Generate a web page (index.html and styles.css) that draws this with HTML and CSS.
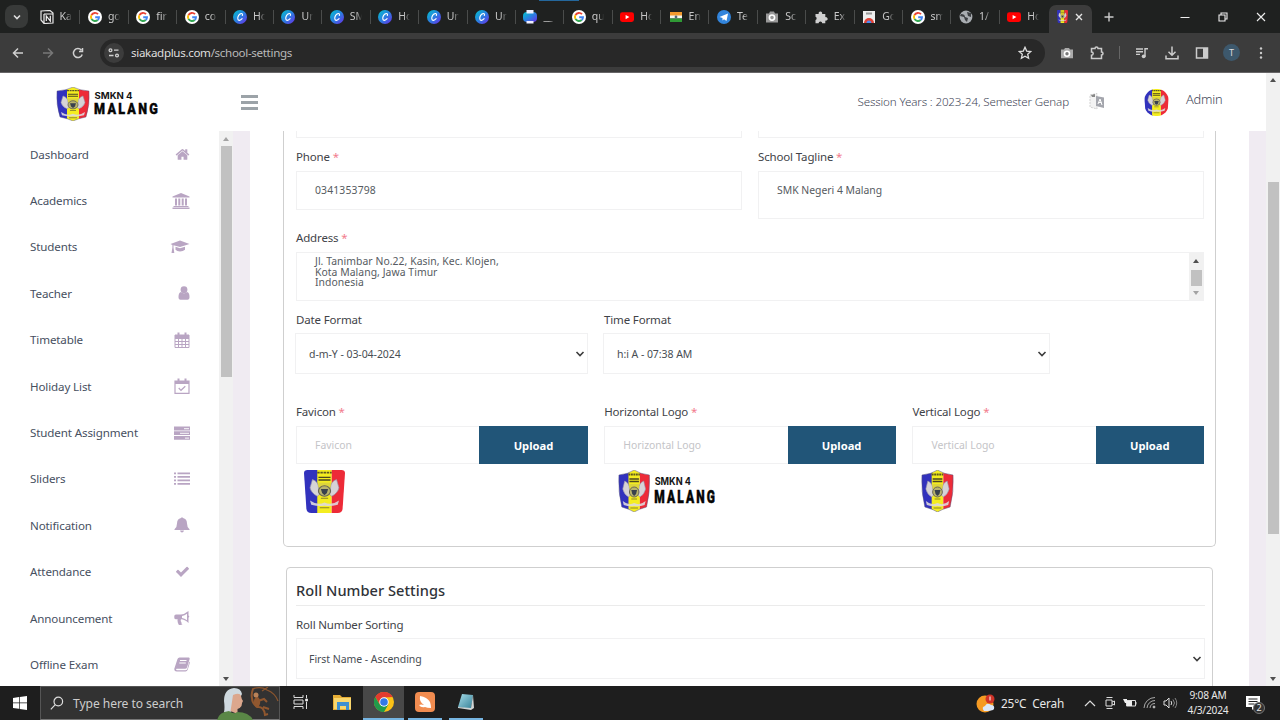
FILE: index.html
```html
<!DOCTYPE html>
<html lang="en">
<head>
<meta charset="utf-8">
<title>School Settings</title>
<link rel="stylesheet" href="styles.css">
</head>
<body>
<svg class="defs" aria-hidden="true">
  <defs>
    <linearGradient id="canvaFill" x1="0" y1="0" x2="1" y2="1"><stop offset="0" stop-color="#00c4cc"/><stop offset=".5" stop-color="#2a7fe0"/><stop offset="1" stop-color="#6b2be8"/></linearGradient>
    <linearGradient id="padFill" x1="0" y1="0" x2="1" y2="1"><stop offset="0" stop-color="#a6dce8"/><stop offset="1" stop-color="#337f96"/></linearGradient>
    <clipPath id="shield"><path d="M1 5Q11 4 17 0Q23 4 33 5Q34 22 30 37Q22 39 17 42Q12 39 4 37Q0 22 1 5Z"/></clipPath>
    <clipPath id="badge"><path d="M3 0H31Q34 0 34 3L32 38Q31.500 42 28 42H6Q2.500 42 2 38L0 3Q0 0 3 0Z"/></clipPath>
  </defs>
  <symbol id="google" viewBox="0 0 14 14"><circle cx="7" cy="7" r="7" fill="#fff"/><g fill="none" stroke-width="1.9"><path d="M10 4.2A4.1 4.1 0 0 0 3.5 4.9" stroke="#ea4335"/><path d="M3.5 4.9a4.1 4.1 0 0 0 0 4.2" stroke="#fbbc05"/><path d="M3.5 9.1A4.1 4.1 0 0 0 9.7 10" stroke="#34a853"/><path d="M9.7 10A4 4 0 0 0 11 7.2H7.2" stroke="#4285f4"/></g></symbol>
  <symbol id="canva" viewBox="0 0 14 14"><circle cx="7" cy="7" r="7" fill="url(#canvaFill)"/><path d="M9.3 5.5c.7-1.4-.3-2.2-1.3-1.9C5.900 4.100 4.500 6.800 4.800 8.800c.3 2.200 2.700 2 4.300-.1" fill="none" stroke="#fff" stroke-width="1.100" stroke-linecap="round"/></symbol>
  <symbol id="youtube" viewBox="0 0 14 14"><rect y="2.300" width="14" height="9.600" rx="2.300" fill="#f00"/><path d="M5.600 4.900v4.400L9.400 7.100z" fill="#fff"/></symbol>
  <symbol id="emblem" viewBox="0 0 34 42" preserveAspectRatio="none">
    <path d="M11 4.500h12" stroke="#5c5720" stroke-width="1.800" stroke-dasharray="2 .6"/><path d="M12 9h10M12 11.500h10" stroke="#4a4520" stroke-width="1.300"/>
    <path d="M7 11q5 2 5 8l3 4-4 4q-5-3-6-8 1-4 2-8zM27 11q-5 2-5 8l-3 4 4 4q5-3 6-8-1-4-2-8z" fill="#d6d3d6" stroke="#9793a8" stroke-width=".6"/>
    <path d="M5 31q6 5 12 2q6 3 12-2l-1 4q-6 2-11 1q-5 1-11-1z" fill="#ddd8dc" opacity=".9"/>
    <path d="M12 14h10v4H12z" fill="#ddd53c"/>
    <circle cx="17" cy="22" r="5" fill="#b9b46c" stroke="#686556"/><path d="M14 20h6l-1 4-2 2-2-2z" fill="#39414d"/><path d="M14 29h6M13 38h8" stroke="#8b842a"/>
  </symbol>
  <symbol id="crest" viewBox="0 0 34 42" preserveAspectRatio="none">
    <g clip-path="url(#shield)"><path d="M0 0h12v42H0z" fill="#3232bd"/><path d="M11 0h12v42H11z" fill="#f4ed20"/><path d="M23 0h11v42H23z" fill="#ed2b38"/></g>
    <use href="#emblem" width="34" height="42"/>
    <path d="M1 5Q11 4 17 0Q23 4 33 5Q34 22 30 37Q22 39 17 42Q12 39 4 37Q0 22 1 5Z" fill="none" stroke="#55517a" stroke-width=".5"/>
  </symbol>
  <symbol id="crestBadge" viewBox="0 0 34 42" preserveAspectRatio="none">
    <g clip-path="url(#badge)"><path d="M0 0h12v42H0z" fill="#3232bd"/><path d="M11 0h12v42H11z" fill="#f4ed20"/><path d="M23 0h11v42H23z" fill="#ed2b38"/></g>
    <use href="#emblem" y="-2" width="34" height="43"/>
  </symbol>
  <symbol id="brand" viewBox="0 0 103 42"><use href="#crest" width="34" height="42"/><text class="brand-top" transform="translate(38.500 14.500) scale(.93 1)">SMKN 4</text><text class="brand-main" transform="translate(38 33) scale(.68 1)">MALANG</text></symbol>
  <symbol id="caret" viewBox="0 0 10 8"><path d="M1.500 2l3.500 3.500L8.500 2" fill="none" stroke="#3d3d3d" stroke-width="1.600"/></symbol>
</svg>

<header class="tabs">
  <span class="drag-mark"></span>
  <button class="tab-search"><svg viewBox="0 0 10 10" width="10" height="10"><path d="M2 3.500l3 3 3-3" fill="none" stroke="#ddd" stroke-width="1.600"/></svg></button>
  <div class="tab"><svg viewBox="0 0 14 14"><path d="M1 1l9-.5L13 3v10l-9 .5L1 10z" fill="#222" stroke="#e8e8e8" stroke-width="1.200"/><path d="M4 4h9M4 4v9M6.300 11V6l4 5V5.800" fill="none" stroke="#f2f2f2" stroke-width="1.200"/></svg><span>Ka</span></div>
  <div class="tab"><svg><use href="#google"/></svg><span>go</span></div>
  <div class="tab"><svg><use href="#google"/></svg><span>fir</span></div>
  <div class="tab"><svg><use href="#google"/></svg><span>co</span></div>
  <div class="tab"><svg><use href="#canva"/></svg><span>Ho</span></div>
  <div class="tab"><svg><use href="#canva"/></svg><span>Un</span></div>
  <div class="tab"><svg><use href="#canva"/></svg><span>SM</span></div>
  <div class="tab"><svg><use href="#canva"/></svg><span>Ho</span></div>
  <div class="tab"><svg><use href="#canva"/></svg><span>Un</span></div>
  <div class="tab"><svg><use href="#canva"/></svg><span>Un</span></div>
  <div class="tab"><svg viewBox="0 0 14 14"><rect y="2" width="14" height="10" rx="4" fill="url(#canvaFill)"/><path d="M3.500 0h7v3.500h-7zM3.500 11h7v2.500h-7z" fill="#eef"/></svg><span>__</span></div>
  <div class="tab"><svg><use href="#google"/></svg><span>qu</span></div>
  <div class="tab"><svg><use href="#youtube"/></svg><span>Ho</span></div>
  <div class="tab"><svg viewBox="0 0 14 14"><path d="M1 2h12v4H1z" fill="#f29a2e"/><path d="M1 5.500h12v3H1z" fill="#f5f5ee"/><path d="M1 8.500h12V12H1z" fill="#2f9a35"/><circle cx="7" cy="7" r="1.400" fill="#567"/></svg><span>En</span></div>
  <div class="tab"><svg viewBox="0 0 14 14"><circle cx="7" cy="7" r="7" fill="#3285dc"/><path d="M2.500 7L11 3.500 9.500 11 7 9.200 5.500 10.500V8z" fill="#fff"/></svg><span>Te</span></div>
  <div class="tab"><svg viewBox="0 0 14 14"><path d="M1 3.500h3L5 1.500h4l1 2h3v9H1z" fill="#999"/><circle cx="7" cy="7.600" r="2.600" fill="#999" stroke="#fff" stroke-width="1.600"/></svg><span>Sc</span></div>
  <div class="tab"><svg viewBox="0 0 14 14"><path d="M1.500 4h3.200a1.800 1.800 0 1 1 3.400 0h3.200v3.200a1.800 1.800 0 1 1 0 3.400v2.600H8.200a1.800 1.800 0 0 0-3.600 0H1.500V10a1.700 1.700 0 0 0 0-3.200z" fill="#cfcfcf"/></svg><span>Ex</span></div>
  <div class="tab"><svg viewBox="0 0 14 14"><path d="M1 1h12v12H1z" fill="#eee"/><path d="M2 13a5 5 0 0 1 10 0z" fill="#e04437"/><path d="M4.500 13a2.500 2.500 0 0 1 5 0z" fill="#4c8bf5"/><path d="M4 2.500h6v2H4z" fill="#999"/></svg><span>Go</span></div>
  <div class="tab"><svg><use href="#google"/></svg><span>sm</span></div>
  <div class="tab"><svg viewBox="0 0 14 14"><circle cx="7" cy="7" r="6.400" fill="#a9adb1"/><path d="M2 4q4 0 4 3l3 1-1 4-2-2-1-3-4-1zM8 2l4 1v4l-3-1z" fill="#3c3f42"/></svg><span>1/</span></div>
  <div class="tab last"><svg><use href="#youtube"/></svg><span>Ho</span></div>
  <div class="tab-active"><svg width="11" height="13"><use href="#crestBadge"/></svg><svg width="8" height="8" viewBox="0 0 8 8"><path d="M1 1l6 6M7 1L1 7" stroke="#e4e4e4" stroke-width="1.400"/></svg></div>
  <svg class="new-tab" width="10" height="10" viewBox="0 0 10 10"><path d="M5 .5v9M.5 5h9" stroke="#ccc" stroke-width="1.400"/></svg>
  <div class="window-controls">
    <svg width="10" height="10" viewBox="0 0 10 10"><path d="M.5 5.500h9" stroke="#eee"/></svg>
    <svg width="10" height="10" viewBox="0 0 10 10"><path d="M1 3h6v6H1zM3 3V1h6v6H7" fill="none" stroke="#eee" stroke-width="1.100"/></svg>
    <svg width="10" height="10" viewBox="0 0 10 10"><path d="M1 1l8 8M9 1L1 9" stroke="#eee" stroke-width="1.100"/></svg>
  </div>
</header>

<nav class="toolbar">
  <div class="nav-buttons">
    <svg width="12" height="12" viewBox="0 0 12 12"><path d="M11 6H1.500M6 1.500L1.500 6 6 10.500" stroke="#d0d0d0"/></svg>
    <svg width="12" height="12" viewBox="0 0 12 12"><path d="M1 6h9.500M6 1.500L10.500 6 6 10.500" stroke="#787878"/></svg>
    <svg width="12" height="12" viewBox="0 0 12 12"><path d="M10.200 7.500a4.500 4.500 0 1 1-.8-4.300M10.500 1v3.500H7" stroke="#d0d0d0"/></svg>
  </div>
  <div class="omnibox">
    <span class="site-info"><svg width="12" height="10" viewBox="0 0 12 10" fill="none" stroke="#d0d0d0" stroke-width="1.300"><circle cx="2.500" cy="2.200" r="1.400"/><path d="M6 2.200h4.500M1 7.500h4.500"/><circle cx="9" cy="7.500" r="1.400"/></svg></span>
    <span class="url">siakadplus.com<em>/school-settings</em></span>
    <svg class="star" width="14" height="14" viewBox="0 0 14 14"><path d="M7 1.300l1.700 3.800 4.100.4-3.100 2.700.9 4.100L7 10.200l-3.600 2.100.9-4.100-3.100-2.700 4.100-.4z" fill="none" stroke="#dedede" stroke-width="1.300"/></svg>
  </div>
  <div class="extensions">
    <svg width="14" height="14" viewBox="0 0 14 14"><path d="M1 3.500h3l1-1.500h4l1 1.500h3v8.800H1z" fill="#aaa"/><circle cx="7" cy="7.800" r="2.500" fill="#777" stroke="#fff" stroke-width="1.600"/></svg>
    <svg width="14" height="14" viewBox="0 0 14 14"><path d="M1.500 2.500H5a1.500 1.500 0 0 1 3 0h3.500V6a1.500 1.500 0 0 1 0 3v3.500h-10V9.300a1.700 1.700 0 0 0 0-3.400z" fill="none" stroke="#ccc" stroke-width="1.500"/></svg>
    <i></i>
    <svg width="14" height="14" viewBox="0 0 14 14"><path d="M1 3h7M1 5.700h7M1 8.400h4M10 10.500V2.800h3" fill="none" stroke="#ccc" stroke-width="1.400"/><circle cx="8.700" cy="10.300" r="1.900" fill="#ccc"/></svg>
    <svg width="14" height="14" viewBox="0 0 14 14"><path d="M7 .5V9M3.500 5.700L7 9.200l3.500-3.500M1 9.500v3.300h12V9.500" fill="none" stroke="#ccc" stroke-width="1.500"/></svg>
    <svg width="14" height="14" viewBox="0 0 14 14"><path d="M1.500 2h11v10h-11z" fill="none" stroke="#ccc" stroke-width="1.500"/><path d="M8 2h5v10H8z" fill="#ccc"/></svg>
    <b>T</b>
    <svg class="kebab" width="14" height="14" viewBox="0 0 14 14" fill="#ccc"><circle cx="7" cy="2.500" r="1.200"/><circle cx="7" cy="7" r="1.200"/><circle cx="7" cy="11.500" r="1.200"/></svg>
  </div>
</nav>

<main class="viewport">
  <div class="app">
    <header class="app-header">
      <svg class="app-logo" viewBox="0 0 103 42" preserveAspectRatio="none"><use href="#brand" width="103" height="42"/></svg>
      <div class="burger"><i></i><i></i><i></i></div>
      <span class="session">Session Years : 2023-24, Semester Genap</span>
      <svg class="translate" width="16" height="18" viewBox="0 0 16 18"><path d="M1 2l7-1.500V16l-7-2z" fill="#f3f3f3" stroke="#c5c5c5" stroke-width=".8" stroke-dasharray="2 1"/><path d="M2 2l4-1v3H3z" fill="#888"/><path d="M7 3l8 1.500V15l-8-2z" fill="#a4a6ad"/><path d="M9 11l2-5 2 6M9.500 9.500h3" fill="none" stroke="#fff"/></svg>
      <svg class="avatar" viewBox="0 0 34 42" preserveAspectRatio="none"><use href="#crestBadge" width="34" height="42"/></svg>
      <span class="user">Admin</span>
    </header>
    <div class="app-body">
      <aside class="sidebar">
        <ul class="menu">
          <li><span>Dashboard</span><svg viewBox="0 0 1792 1792" width="15" height="15"><path d="M1472 992v480q0 26-19 45t-45 19h-384v-384h-256v384h-384q-26 0-45-19t-19-45v-480q0-1 .5-3t.5-3l575-474 575 474q1 2 1 6zm223-69l-62 74q-8 9-21 11h-3q-13 0-21-7l-692-577-692 577q-12 8-24 7-13-2-21-11l-62-74q-8-10-7-23.500t11-21.500l719-599q32-26 76-26t76 26l244 204v-195q0-14 9-23t23-9h192q14 0 23 9t9 23v408l219 182q10 8 11 21.500t-7 23.500z"/></svg></li>
          <li><span>Academics</span><svg viewBox="0 0 18 16" width="18" height="16"><path d="M9 0l8.500 3.500v1H.5v-1zM3 5.500h2v7H3zM6.300 5.500h2v7h-2zM9.700 5.500h2v7h-2zM13 5.500h2v7h-2zM1.500 13h15v1h-15zM.5 14.500h17V16H.5z"/></svg></li>
          <li><span>Students</span><svg viewBox="0 0 20 14" width="20" height="14"><path d="M10 .5L19.500 4 10 7 3.500 5.200v2.300l.8 5.500H1.500l.9-5.500V4.900L.5 4zM5.500 6.800L10 8.300l5-1.500v3q-2 1.800-5 1.800t-4.500-1.800z"/></svg></li>
          <li><span>Teacher</span><svg viewBox="0 0 12 14" width="12" height="14"><circle cx="6" cy="3.700" r="3.400"/><path d="M3 6q3 2.600 6 0 2.500.5 2.500 5 0 2.800-2 2.800h-7q-2 0-2-2.800Q.5 6.500 3 6z"/></svg></li>
          <li><span>Timetable</span><svg viewBox="0 0 16 16" width="16" height="16"><path d="M1 3h14v12.500H1zM1 6.500h14M4.500 6.500v9M8 6.500v9M11.500 6.500v9M1 9.500h14M1 12.500h14" fill="none" stroke="#b9a5c3"/><path d="M1 3h14v3H1zM3.500.5h2v4h-2zM10.500.5h2v4h-2z"/></svg></li>
          <li><span>Holiday List</span><svg viewBox="0 0 16 16" width="16" height="16"><path d="M1 3h14v12.300H1z" fill="none" stroke="#b9a5c3" stroke-width="1.200"/><path d="M1 3h14v3H1zM3.500.5h2v4h-2zM10.500.5h2v4h-2z"/><path d="M4.700 10l2.300 2.300 4.300-4" fill="none" stroke="#b9a5c3" stroke-width="1.200"/></svg></li>
          <li><span>Student Assignment</span><svg viewBox="0 0 16 14" width="16" height="14"><path d="M0 .5h16v4H0zM0 5.300h16v3.700H0zM0 10h16v3.700H0z"/><path d="M10 2h5v1.200h-5zM6 6.700h9v1.200H6zM11 11.500h4v1.200h-4z" fill="#fff" opacity=".75"/></svg></li>
          <li><span>Sliders</span><svg viewBox="0 0 16 13" width="16" height="13"><path d="M0 .5h2v1.800H0zM3.500.5H16v1.800H3.500zM0 4h2v1.800H0zM3.500 4H16v1.800H3.500zM0 7.500h2v1.800H0zM3.500 7.500H16v1.800H3.500zM0 11h2v1.800H0zM3.500 11H16v1.800H3.500z"/></svg></li>
          <li><span>Notification</span><svg viewBox="0 0 16 16" width="16" height="16"><path d="M7 1q1-1.500 2 0 4 .8 4 5.500 0 4 2.500 5.800v.7H.5v-.7Q3 10.500 3 6.500 3 1.800 7 1zM6 13.500h4q-.5 2-2 2t-2-2z"/></svg></li>
          <li><span>Attendance</span><svg viewBox="0 0 1792 1792" width="15" height="15"><path d="M1671 566q0 40-28 68l-724 724-136 136q-28 28-68 28t-68-28l-136-136-362-362q-28-28-28-68t28-68l136-136q28-28 68-28t68 28l294 295 656-657q28-28 68-28t68 28l136 136q28 28 28 68z"/></svg></li>
          <li><span>Announcement</span><svg viewBox="0 0 16 14" width="16" height="14"><path d="M14.500 0v4.500q1.500 1 0 2.300V12q-4-3.700-7.300-3.700-1.200 1 .3 3-.5 1.200 1 2-1.500 1-3.800.4-1.700-3.500-1-5.400H2Q.3 8.300.3 6.800V5Q.3 3.500 2 3.500h5Q10.500 3.300 14.500 0zM13 2.800Q10.500 4.600 8 5v2q2.500.5 5 2.200z" fill-rule="evenodd"/></svg></li>
          <li><span>Offline Exam</span><svg viewBox="0 0 16 15" width="16" height="15"><path d="M5.500.5H15q1 .5.500 2l-2.500 8q-.5 1.300-2 1.300H2.500q-1 1.200.5 1.400h8.500q1.300 0 1.800-1.200l2-7.500q.8.500.4 1.800l-2 6.500q-.6 1.700-2.200 1.700H2.700Q0 14.500.3 11.800L3.500 2Q4 .5 5.500.5z"/><path d="M6 3.500h6.500M5.300 6h6.500" stroke="#fff"/></svg></li>
        </ul>
        <div class="scroll side-scroll"><span class="up dim"></span><i></i><span class="down"></span></div>
      </aside>
      <section class="content">
        <div class="card school">
          <div class="row halves stub"><div class="box"></div><div class="box"></div></div>
          <div class="row halves contact">
            <div class="field"><label>Phone <em>*</em></label><div class="box input phone">0341353798</div></div>
            <div class="field"><label>School Tagline <em>*</em></label><div class="box input tall"><span>SMK Negeri 4 Malang</span></div></div>
          </div>
          <div class="field address">
            <label>Address <em>*</em></label>
            <div class="box area"><p>Jl. Tanimbar No.22, Kasin, Kec. Klojen,<br>Kota Malang, Jawa Timur<br>Indonesia</p><div class="scroll area-scroll"><span class="up"></span><i></i><span class="down dim"></span></div></div>
          </div>
          <div class="row formats">
            <div class="field"><label>Date Format</label><div class="box select"><span>d-m-Y - 03-04-2024</span><svg><use href="#caret"/></svg></div></div>
            <div class="field"><label>Time Format</label><div class="box select"><span>h:i A - 07:38 AM</span><svg><use href="#caret"/></svg></div></div>
          </div>
          <div class="row uploads">
            <div class="field"><label>Favicon <em>*</em></label><div class="upload"><div class="box input hint">Favicon</div><button>Upload</button></div><svg class="pic favicon" viewBox="0 0 34 42" preserveAspectRatio="none"><use href="#crestBadge" width="34" height="42"/></svg></div>
            <div class="field"><label>Horizontal Logo <em>*</em></label><div class="upload"><div class="box input hint">Horizontal Logo</div><button>Upload</button></div><svg class="pic horizontal" viewBox="0 0 103 42" preserveAspectRatio="none"><use href="#brand" width="103" height="42"/></svg></div>
            <div class="field"><label>Vertical Logo <em>*</em></label><div class="upload"><div class="box input hint">Vertical Logo</div><button>Upload</button></div><svg class="pic vertical" viewBox="0 0 34 42" preserveAspectRatio="none"><use href="#crest" width="34" height="42"/></svg></div>
          </div>
        </div>
        <div class="card roll">
          <h2>Roll Number Settings</h2>
          <div class="field"><label>Roll Number Sorting</label><div class="box select"><span>First Name - Ascending</span><svg><use href="#caret"/></svg></div></div>
        </div>
      </section>
    </div>
  </div>
  <div class="scroll page-scroll"><span class="up"></span><i></i><span class="down"></span></div>
</main>

<footer class="taskbar">
  <div class="start"><svg width="14" height="14" viewBox="0 0 14 14" fill="#fff"><path d="M0 2l6-.9v5.500H0zM6.700 1L14 0v6.600H6.700zM0 7.300h6v5.500L0 12zM6.700 7.300H14V14l-7.300-1z"/></svg></div>
  <div class="search">
    <svg width="14" height="14" viewBox="0 0 14 14"><circle cx="8.300" cy="5.500" r="4.300" fill="none" stroke="#ddd" stroke-width="1.200"/><path d="M5.300 8.700L.8 13.300" stroke="#ddd" stroke-width="1.200"/></svg>
    <span>Type here to search</span>
    <svg class="doodle" width="64" height="33" viewBox="0 0 64 33"><path d="M9 25q1-4 0-11Q9 2 19 1q7 0 8 6l-7 14q-5 6-11 4z" fill="#cfd9df"/><path d="M18 8q7-3 8 1 .5 3 2 5-1 1-1.500 5-2 3-4 3v5l-7-3 1-6z" fill="#dca78d"/><path d="M2 33q2-8 12-9 5 4 8 1 12 0 16 8z" fill="#5a8746"/><path d="M37 2q9-3 15 1 8 3 11 11M47 4l6-4" fill="none" stroke="#8b552e" stroke-width="1.300"/><path d="M38 2q-2 5-1 9 0 5 5 9 7-1 8 8l3-1M43 14l6-2 3 3M48 20l6 2" fill="none" stroke="#90572f" stroke-width="2"/><ellipse cx="42" cy="15" rx="3.200" ry="5" fill="#90572f"/><circle cx="41" cy="8" r="2.500" fill="#b98258"/></svg>
  </div>
  <div class="app-slot view"><svg width="16" height="14" viewBox="0 0 16 14" fill="none" stroke="#ddd"><path d="M1 0v2.500h9V0M1 14v-2.500h9V14M1 5h9v4H1zM13.500 0v3M13.500 7v7"/><path d="M12.700 4h1.800v2h-1.800z" fill="#fff"/></svg></div>
  <div class="app-slot"><svg width="19" height="16" viewBox="0 0 19 16"><path d="M0 1h7l2 2h9v13H0z" fill="#e6ad35"/><path d="M1 4h17v11H1z" fill="#f8d66d"/><path d="M4 8h12v8h-3v-4H7v4H4z" fill="#3d8fd1"/></svg></div>
  <div class="app-slot open current"><svg width="20" height="20" viewBox="0 0 20 20"><circle cx="10" cy="10" r="10" fill="#fbc116"/><path d="M1.300 5A10 10 0 0 1 18.700 5L10 5.500 5.700 12.500z" fill="#e33b2e"/><path d="M1.300 5A10 10 0 0 0 10 20l4.300-7.500H5.700z" fill="#219b4b"/><circle cx="10" cy="10" r="4.700" fill="#fff"/><circle cx="10" cy="10" r="3.800" fill="#3478e5"/></svg></div>
  <div class="app-slot open"><svg width="20" height="20" viewBox="0 0 20 20"><rect width="20" height="20" rx="4" fill="#f18c50"/><path d="M5 4q7 1 10 6 1 3 1 6-4 0-6-1-4 1-6-2 2-1 5 0Q4 10 5 4z" fill="#fff"/></svg></div>
  <div class="app-slot open"><svg width="20" height="18" viewBox="0 0 20 18"><path d="M6 1l11 1-2 14-13-2z" fill="url(#padFill)"/><path d="M17 2l1 13-3 2-13-2v-1l13 1z" fill="#d0d5d5"/></svg></div>
  <div class="tray">
    <svg width="20" height="19" viewBox="0 0 20 19"><circle cx="9" cy="10" r="8.500" fill="#f59a23"/><path d="M8 17q-3-4 1-5 2-4 6-1 4 0 3 4-1 2-10 2z" fill="#dbe8fb"/><circle cx="14" cy="5" r="4.500" fill="#cf3328"/><path d="M14 2.500v4" stroke="#fff"/></svg>
    <span class="weather">25°C&nbsp; Cerah</span>
    <svg class="chev" width="12" height="8" viewBox="0 0 12 8"><path d="M1 7l5-5 5 5" fill="none" stroke="#ddd" stroke-width="1.200"/></svg>
    <svg class="ic" width="14" height="14" viewBox="0 0 14 14" fill="none" stroke="#ddd"><path d="M3 4h6v6H3zM9 6l2.500-1v4L9 8M3.500 1.500h6M3.500 12.500h6"/></svg>
    <svg class="ic" width="14" height="14" viewBox="0 0 14 14"><path d="M3.500 4.500h9v5.500h-9zM13 6v2.500" fill="none" stroke="#ddd"/><path d="M4 5h5v5H4zM0 3h4v4H2z" fill="#eee"/></svg>
    <svg class="ic" width="14" height="14" viewBox="0 0 14 14" fill="none" stroke="#aaa"><path d="M1 12A11 11 0 0 1 12 1.500M4 12a8 8 0 0 1 8-7.500M7 12a5 5 0 0 1 5-4.500"/><circle cx="11" cy="11" r="1" fill="#fff"/></svg>
    <svg class="vol" width="15" height="14" viewBox="0 0 15 14" fill="none" stroke="#ddd"><path d="M1 5h2l3-3v10L3 9H1zM8 5q1.500 2 0 4"/><path d="M10 3.500q3 3.500 0 7M12 2q3.500 5 0 10" stroke="#888"/></svg>
    <div class="clock"><span>9:08 AM</span><span>4/3/2024</span></div>
    <div class="notices"><svg width="15" height="15" viewBox="0 0 15 15"><path d="M0 0h14v11H9l-3 3v-3H0z" fill="#fff"/><path d="M2.500 3h9M2.500 5.500h9M2.500 8h6" stroke="#222"/></svg><b>2</b></div>
  </div>
</footer>
</body>
</html>
```
FILE: styles.css
```css
* { box-sizing: border-box; }
body { margin: 0; width: 1280px; height: 720px; overflow: hidden; display: flex; flex-direction: column; font-family: "Noto Sans", sans-serif; background: #fff; }
button { border: 0; padding: 0; font-family: inherit; }
em { font-style: normal; }
svg { display: block; flex: none; }
.defs { position: absolute; width: 0; height: 0; }
.brand-top { font: 700 10.3px Inter, sans-serif; fill: #151515; }
.brand-main { font: 900 18.5px Roboto, sans-serif; letter-spacing: 3.3px; fill: #050505; stroke: #050505; stroke-width: .5px; }

/* Browser tab strip */
.tabs { position: relative; height: 33px; flex: none; display: flex; align-items: center; background: #1f2120; color: #c8c8c8; }
.drag-mark { position: absolute; left: 539px; top: 0; width: 40px; height: 1px; background: #24679c; }
.tab-search { width: 23px; height: 23px; margin: 0 4px 0 5px; border-radius: 8px; background: #383a39; display: grid; place-items: center; }
.tab { width: 48.4px; height: 14px; flex: none; display: flex; align-items: center; padding-left: 7.5px; border-right: 1px solid #4a4c4b; }
.tab.last { border-color: transparent; }
.tab svg { width: 14px; height: 14px; }
.tab span { margin-left: 6px; width: 18px; white-space: nowrap; font-size: 10.5px; line-height: 15px; -webkit-mask-image: linear-gradient(90deg, #000 6px, transparent 12px); mask-image: linear-gradient(90deg, #000 6px, transparent 12px); }
.tab-active { align-self: flex-end; width: 43px; height: 28px; margin-left: 1px; border-radius: 7px 7px 0 0; background: #3c3c3c; display: flex; align-items: center; gap: 7px; padding: 0 0 5px 8px; }
.new-tab { margin-left: 12px; }
.window-controls { margin: 0 14px 0 auto; display: flex; gap: 28px; }

/* Address bar */
.toolbar { height: 40px; flex: none; display: flex; align-items: center; background: #3c3c3c; border-bottom: 1px solid #676567; }
.nav-buttons { display: flex; gap: 18px; padding-left: 12px; width: 100px; }
.nav-buttons path { fill: none; stroke-width: 1.5; }
.omnibox { width: 945px; height: 28px; border-radius: 14px; background: #282828; display: flex; align-items: center; padding: 0 13px 0 4px; color: #dedede; font-size: 11.6px; }
.site-info { width: 20px; height: 20px; border-radius: 50%; background: #3c3c3c; display: grid; place-items: center; }
.url { margin-left: 7px; letter-spacing: -.33px; }
.url em { color: #b9b9b9; }
.star { margin-left: auto; }
.extensions { display: flex; align-items: center; flex: 1; padding-left: 15px; gap: 16px; }
.extensions i { width: 1px; height: 13px; margin: 0 -1px; background: #666; }
.extensions b { width: 17px; height: 17px; margin: 0 -2px; border-radius: 50%; background: #3d586c; color: #ddd; font: 9px/17px "Noto Sans", sans-serif; text-align: center; }

/* Page */
.viewport { height: 613px; flex: none; display: flex; overflow: hidden; }
.app { width: 1266px; display: flex; flex-direction: column; }
.app-header { height: 58px; flex: none; display: flex; align-items: center; color: #3f4657; }
.app-logo { width: 103px; height: 34px; margin: 3px 0 0 56px; }
.burger { width: 17px; margin-left: 82px; display: grid; gap: 3px; }
.burger i { height: 3px; background: #9ca3a8; }
.session { margin: -2px 0 0 auto; font-size: 11.6px; font-weight: 300; letter-spacing: -.14px; }
.translate { margin-left: 20px; }
.avatar { width: 25px; height: 27px; margin-left: 39px; border-radius: 46%; }
.user { margin: -6px 43px 0 17px; width: 37px; font-size: 12.8px; font-weight: 300; letter-spacing: -.2px; }
.app-body { height: 555px; flex: none; display: flex; background: #f0ebf2; overflow: hidden; }
.sidebar { width: 233px; background: #fff; display: flex; }
.menu { width: 219px; margin: 0; padding: 0; list-style: none; color: #47505f; font-size: 11.6px; letter-spacing: -.13px; }
.menu li { height: 46.4px; display: flex; justify-content: space-between; align-items: center; padding: 0 29.5px 0 30px; }
.menu svg { fill: #b9a5c3; }
.scroll { flex: none; width: 14px; background: #f1f1f1; display: flex; flex-direction: column; align-items: center; }
.scroll i { width: 11px; background: #c1c1c1; }
.up, .down { width: 0; height: 0; border: 3px solid transparent; }
.up { border-top: 0; border-bottom: 4px solid #505050; }
.down { border-bottom: 0; border-top: 4px solid #505050; margin-top: auto; }
.up.dim { border-bottom-color: #a3a3a3; }
.down.dim { border-top-color: #a3a3a3; }
.side-scroll { padding: 6px 0 5px; }
.side-scroll i { height: 231px; margin-top: 5px; }
.page-scroll { padding: 5px 0; }
.page-scroll i { height: 352px; margin-top: 100px; }

/* Settings form */
.content { width: 999px; margin-left: 17px; background: #fff; overflow: hidden; }
.card { border: 1px solid #cfcfcf; border-radius: 4px; }
.school { width: 933px; height: 416px; margin-left: 33px; border-top: 0; border-radius: 0 0 5px 5px; padding: 0 12px; }
.row { display: grid; }
.halves { grid-template-columns: 446px 446px; gap: 16px; }
.box { border: 1px solid #f1f1f2; background: #fff; }
.stub .box { height: 7px; border-top: 0; }
.field { display: flex; flex-direction: column; }
label { height: 18px; line-height: 18px; font-size: 11.5px; letter-spacing: -.15px; color: #3f4348; }
label em { color: #f27c8d; }
.contact { margin-top: 10px; height: 71px; }
.input { height: 39px; margin-top: 5px; padding: 0 18px; line-height: 37px; font-size: 10.4px; color: #565b61; }
.phone { letter-spacing: .15px; }
.input.tall { height: 48px; }
.address { margin-top: 10px; width: 908px; }
.area { height: 49px; margin-top: 5px; display: flex; justify-content: space-between; overflow: hidden; color: #565b61; }
.area p { margin: 3px 18px; font-size: 10.4px; line-height: 10.7px; letter-spacing: .05px; }
.area-scroll { padding: 6px 0 5px; }
.area-scroll i { height: 16px; margin-top: 7px; }
.formats { grid-template-columns: 293px 447px; gap: 15px; margin: 10px 0 0 -1px; }
.formats label { padding-left: 1px; }
.select { height: 41px; margin-top: 4px; padding: 0 2px 0 13px; display: flex; align-items: center; justify-content: space-between; color: #484d53; font-size: 10.5px; letter-spacing: -.05px; }
.select svg { width: 10px; height: 8px; }
.uploads { grid-template-columns: repeat(3, 291.5px); gap: 16.7px; margin-top: 28px; }
.upload { height: 38px; margin-top: 6px; display: flex; }
.upload .input { width: 183.4px; height: 38px; margin: 0; border-right: 0; }
.uploads .hint { color: #c4c4c7; }
.uploads label { line-height: 19px; }
.upload button { flex: 1; background: #215578; color: #fff; font-size: 11.2px; font-weight: 700; }
.pic { margin-top: 6px; height: 43px; }
.favicon { width: 41px; margin-left: 8px; }
.horizontal { width: 98px; height: 42px; margin-left: 13.5px; }
.vertical { width: 33px; height: 42px; margin-left: 8.5px; }
.roll { width: 927px; height: 180px; margin: 20px 0 0 36px; padding: 0 7px 0 9px; }
.roll h2 { margin: 0; height: 38px; line-height: 44px; border-bottom: 1px solid #ebebeb; font-size: 14.6px; font-weight: 500; color: #303338; letter-spacing: .04px; }
.roll .field { padding-top: 10px; }
.roll .select { padding-left: 12px; }

/* Taskbar */
.taskbar { height: 34px; flex: none; display: flex; background: #1e1e1e; color: #e8e8e8; }
.start { width: 40px; display: grid; place-items: center; }
.search { width: 240px; height: 34px; background: #323232; border: 1px solid #555; border-bottom-color: #777; display: flex; align-items: center; padding-left: 9px; }
.search span { margin-left: 9px; font-size: 12.1px; letter-spacing: -.06px; color: #cdcdcd; white-space: nowrap; }
.doodle { margin-left: auto; }
.app-slot { width: 42px; display: grid; place-items: center; border-bottom: 2px solid transparent; }
.view { width: 41px; }
.app-slot.open { width: 34px; margin: 0 3.5px; border-bottom-color: #76b5e2; }
.app-slot.current { width: 41px; margin: 0; background: #484848; }
.tray { margin-left: auto; display: flex; align-items: center; }
.weather { width: 64px; margin-left: 5px; font-size: 11.8px; letter-spacing: -.15px; white-space: nowrap; }
.chev { margin: 0 7px 0 19px; }
.ic { margin-right: 6px; }
.vol { margin-right: 2px; }
.clock { width: 54px; margin-left: 1px; font-size: 10.2px; line-height: 15.5px; letter-spacing: -.2px; display: flex; flex-direction: column; align-items: center; }
.notices { position: relative; width: 34px; margin-left: 11px; }
.notices b { position: absolute; left: 7px; top: 6px; width: 12px; height: 12px; border-radius: 50%; background: #333; border: 1px solid #777; font: 9px/10px "Noto Sans", sans-serif; text-align: center; }
```
